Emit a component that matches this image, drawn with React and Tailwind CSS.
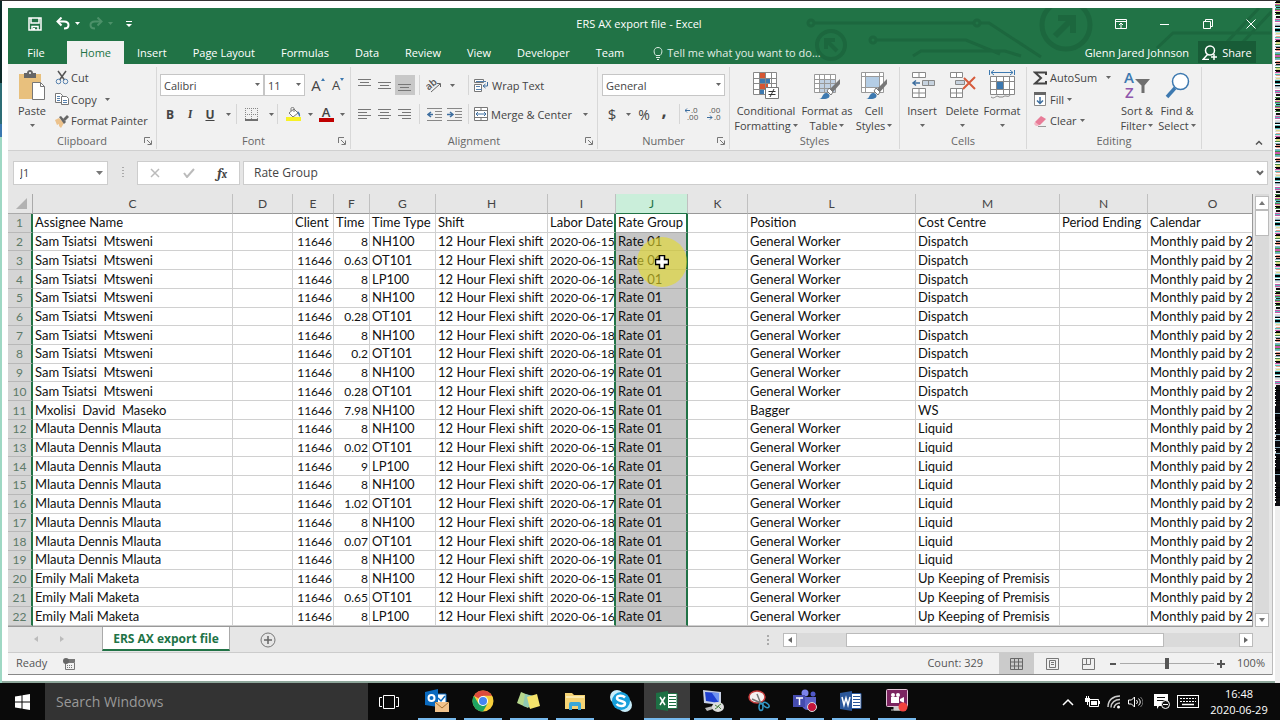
import React, { useState } from 'react';

const names = [
  ...Array(9).fill('Sam Tsiatsi  Mtsweni'),
  'Mxolisi  David  Maseko',
  ...Array(8).fill('Mlauta Dennis Mlauta'),
  ...Array(3).fill('Emily Mali Maketa'),
];
const times = ['8', '0.63', '8', '8', '0.28', '8', '0.2', '8', '0.28', '7.98', '8', '0.02', '9', '8', '1.02', '8', '0.07', '8', '8', '0.65', '8'];
const types = ['NH', 'OT', 'LP', 'NH', 'OT', 'NH', 'OT', 'NH', 'OT', 'NH', 'NH', 'OT', 'LP', 'NH', 'OT', 'NH', 'OT', 'NH', 'NH', 'OT', 'LP'];
const typeCodes = { NH: 'NH100', OT: 'OT101', LP: 'LP100' };
const days = [15, 15, 16, 17, 17, 18, 18, 19, 19, 15, 15, 15, 16, 17, 17, 18, 18, 19, 15, 15, 16];

const costCentre = (i) => {
  if (i < 9) return 'Dispatch';
  if (i === 9) return 'WS';
  if (i < 18) return 'Liquid';
  return 'Up Keeping of Premisis';
};

const columns = [
  { id: 'C', width: 'w-[200px]', title: 'Assignee Name' },
  { id: 'D', width: 'w-[60px]', title: '' },
  { id: 'E', width: 'w-[41px]', title: 'Client', right: true },
  { id: 'F', width: 'w-[36px]', title: 'Time', right: true },
  { id: 'G', width: 'w-[66px]', title: 'Time Type' },
  { id: 'H', width: 'w-[112px]', title: 'Shift' },
  { id: 'I', width: 'w-[68px]', title: 'Labor Date', right: true },
  { id: 'J', width: 'w-[72px]', title: 'Rate Group' },
  { id: 'K', width: 'w-[60px]', title: '' },
  { id: 'L', width: 'w-[168px]', title: 'Position' },
  { id: 'M', width: 'w-[144px]', title: 'Cost Centre' },
  { id: 'N', width: 'w-[88px]', title: 'Period Ending' },
  { id: 'O', width: 'w-[130px]', title: 'Calendar' },
];

const rows = names.map((name, i) => ({
  C: name,
  D: '',
  E: '11646',
  F: times[i],
  G: typeCodes[types[i]],
  H: '12 Hour Flexi shift',
  I: `2020-06-${days[i]}`,
  J: 'Rate 01',
  K: '',
  L: i === 9 ? 'Bagger' : 'General Worker',
  M: costCentre(i),
  N: '',
  O: 'Monthly paid by 2',
}));

// Small shared pieces
const Svg = ({ w, h, children, className = '' }) => (
  <svg width={w} height={h} viewBox={`0 0 ${w} ${h}`} fill="none" className={`shrink-0 ${className}`} aria-hidden="true">
    {children}
  </svg>
);

const Caret = ({ className = 'text-[#666]' }) => (
  <Svg w={5} h={3} className={className}><path d="M0 0h5L2.5 3z" fill="currentColor" /></Svg>
);

const Sep = () => <div className="h-5 w-px shrink-0 bg-[#d6d6d6]" />;

const Tool = ({ label, width = 'w-5', className = '', children }) => (
  <button aria-label={label} className={`flex h-5 shrink-0 items-center justify-center ${width} ${className}`}>{children}</button>
);

const Group = ({ label, width, launcher, children }) => (
  <section className={`flex shrink-0 flex-col border-r border-[#d8d8d8] ${width}`}>
    <div className="flex flex-1">{children}</div>
    <div className="relative h-4 text-center text-[11px] leading-4 text-[#666]">
      {label}
      {launcher && (
        <button aria-label={`${label} settings`} className="absolute right-1 top-1">
          <Svg w={8} h={8}><path d="M.5 6V.5H6M3 3l4 4M7.5 3.500V7.500H3.500" stroke="#777" /></Svg>
        </button>
      )}
    </div>
  </section>
);

const BigTool = ({ icon, lines, caretBelow, width }) => (
  <button className={`flex shrink-0 flex-col items-center whitespace-nowrap ${width}`}>
    <span className="flex h-9 items-center">{icon}</span>
    <span className="leading-[15px]">{lines[0]}</span>
    <span className="flex h-[15px] items-center gap-[2px] leading-[15px]">
      {!caretBelow && lines[1]}
      <Caret />
    </span>
  </button>
);

const Picker = ({ label, value, options, width }) => (
  <label className={`relative block ${width}`}>
    <span className="sr-only">{label}</span>
    <select defaultValue={value} className="block h-[22px] w-full appearance-none border border-[#c6c6c6] bg-white px-[3px] text-[11px] outline-none">
      {options.map((o) => <option key={o}>{o}</option>)}
    </select>
    <span className="pointer-events-none absolute right-1 top-[9px]"><Caret /></span>
  </label>
);

// Horizontal strokes used by the alignment buttons
const Lines = ({ rows: r }) => (
  <Svg w={14} h={12}>
    {r.map(([x1, x2, y]) => <path key={y} d={`M${x1} ${y}.5H${x2}`} stroke="#777" />)}
  </Svg>
);

const SaveIcon = () => (
  <Svg w={14} h={14}><path d="M1 1h12v12H1zM3 1v5h8V1M4 13V9.500h6V13" stroke="#fff" strokeWidth="1.500" /><path d="M5 11h2v2H5z" fill="#fff" /></Svg>
);
const UndoIcon = ({ flip }) => (
  <Svg w={14} h={13} className={flip ? '-scale-x-100' : ''}>
    <path d="M2 4.500h6c6 0 6 7 0 7" stroke={flip ? '#4c9169' : '#fff'} strokeWidth="2" />
    <path d="M5.500.500 1.500 4.500l4 4" stroke={flip ? '#4c9169' : '#fff'} strokeWidth="2" />
  </Svg>
);

const PasteIcon = () => (
  <Svg w={28} h={30}>
    <path d="M1 4h22v25H1z" fill="#e8c07d" />
    <path d="M6 3h3c0-4 6-4 6 0h3v5H6z" fill="#666" /><circle cx="12" cy="3" r="1" fill="#fff" />
    <path d="M14.500 12.500h8l4 4v13h-12z" fill="#fff" stroke="#777" /><path d="M22.500 12.500v4h4" stroke="#777" />
  </Svg>
);
const CutIcon = () => (
  <Svg w={14} h={15}>
    <path d="M3 1l6.500 9M11 1L4.500 10" stroke="#555" strokeWidth="1.500" />
    <circle cx="3.500" cy="11.500" r="2.300" stroke="#5580ad" /><circle cx="10.500" cy="11.500" r="2.300" stroke="#5580ad" />
  </Svg>
);
const CopyIcon = () => (
  <Svg w={14} h={14}>
    <path d="M.5 1.500h5l2 2v7h-7z" fill="#fff" stroke="#777" /><path d="M6.500 4.500h5l2 2v6h-7z" fill="#fff" stroke="#777" />
    <path d="M2 4.500h3M2 6.500h3M2 8.500h3M8 8.500h4M8 10.500h4" stroke="#5580ad" />
  </Svg>
);
const PainterIcon = () => (
  <Svg w={15} h={14}>
    <path d="M1 6l4-2 5 5-3 5-2-2 0-2-2 1z" fill="#ecc28c" />
    <path d="M5 3l2-1 5 6-2 2z" fill="#666" /><path d="M9 5l4-4 2 2-4 4z" fill="#666" />
  </Svg>
);

const FillColor = () => (
  <Svg w={16} h={14}>
    <path d="M3 6l5-4 4 4-5 4z" fill="#fff" stroke="#777" /><path d="M5 4V1.500C5 0 8 0 8 1.500V5" stroke="#777" />
    <path d="M11.500 4c2 1 3 3 2.500 6-1.500-1-2-3-2.500-6z" fill="#4276b0" /><path d="M0 10h15v4H0z" fill="#f7f125" />
  </Svg>
);
const BorderIcon = () => (
  <Svg w={13} h={13}>
    <path d="M.5 0v12M6.500 0v12M12.500 0v12M0 .5h13M0 6.500h13" stroke="#888" strokeDasharray="1 1" /><path d="M0 12h13" stroke="#444" strokeWidth="1.500" />
  </Svg>
);
const AngleIcon = () => (
  <Svg w={16} h={15}>
    <text x="0" y="10" fontSize="10" fontWeight="600" fill="#555" transform="rotate(-40 5 8)">ab</text>
    <path d="M5 14L14 6M11 5.500h3.500V9" stroke="#666" />
  </Svg>
);
const Indent = ({ right }) => (
  <Svg w={15} h={13}>
    <path d="M0 .5h15M8 3.500h7M8 6.500h7M8 9.500h7M0 12.500h15" stroke="#888" />
    <path d={right ? 'M0 6.500h5M3 4l3 2.500L3 9' : 'M1 6.500h5M4 4L1 6.500 4 9'} stroke="#3d6e9f" strokeWidth="1.500" />
  </Svg>
);
const WrapIcon = () => (
  <Svg w={15} h={15}>
    <path d="M.5 1.500h9v3h-9zM.5 6.500h7v7h-7z" fill="#fff" stroke="#777" /><path d="M2 3.500h10M2 8.500h4M2 11.500h6" stroke="#5580ad" />
    <path d="M13.500 4v4h-4M11.500 6L9 8l2.500 2" stroke="#3d6e9f" />
  </Svg>
);
const MergeIcon = () => (
  <Svg w={14} h={14}>
    <path d="M.5.500h13v13H.5zM.5 3.500h13M.5 10.500h13M7 .5v3M7 10.500v3" fill="#fff" stroke="#777" />
    <path d="M2 7h10M4 5L2 7l2 2M10 5l2 2-2 2" stroke="#3d6e9f" />
  </Svg>
);
const DecimalIcon = ({ less }) => (
  <Svg w={15} h={14}>
    <text x={less ? 2 : 6} y="6" fontSize="8" fill="#555">{less ? '.00' : '.0'}</text>
    <text x={less ? 7 : 2} y="13" fontSize="8" fill="#555">{less ? '.0' : '.00'}</text>
    <path d={less ? 'M0 10.500h5M3 8.500l2 2-2 2' : 'M0 3.500h5M2 1.500l-2 2 2 2'} stroke="#3d6e9f" />
  </Svg>
);

const ConditionalIcon = () => (
  <Svg w={28} h={29}>
    <path d="M1.500 1.500h23v22h-23z" fill="#fff" />
    <path d="M8 1h6v6H8zM8 12h8v6H8z" fill="#d65532" /><path d="M8 7h10v5H8zM8 18h4v6H8z" fill="#3d79b0" />
    <path d="M1.500 1.500h23v22h-23zM7.500 1.500v22M13.500 1.500v22M19.500 1.500v22M1.500 7.500h23M1.500 12.500h23M1.500 18.500h23" stroke="#888" />
    <path d="M13.500 16.500h13v11h-13z" fill="#fff" stroke="#777" /><path d="M16.500 20.500h7M16.500 23.500h7M22 18l-4 8" stroke="#333" />
  </Svg>
);
const Brush = () => (
  <>
    <path d="M27 8v5l-7 8-3-3z" fill="#777" /><path d="M16 17l4 4-2 3-4-4z" fill="#fff" stroke="#777" />
    <path d="M6 28c4 0 3-7 8-6 5 2 2 6-2 6z" fill="#3d79b0" />
  </>
);
const TableIcon = () => (
  <Svg w={28} h={29}>
    <path d="M1.500 3.500h21v18h-21z" fill="#fff" /><path d="M7 8h15v13H7z" fill="#c1d1e3" />
    <path d="M1.500 3.500h21v18h-21zM6.500 3.500v18M11.500 3.500v18M17.500 3.500v18M1.500 8.500h21M1.500 12.500h21M1.500 17.500h21" stroke="#999" /><Brush />
  </Svg>
);
const CellStyleIcon = () => (
  <Svg w={28} h={29}>
    <path d="M1.500 1.500h22v20h-22z" fill="#fff" /><path d="M6 6h13v10H6z" fill="#b4cde5" />
    <path d="M1.500 1.500h22v20h-22zM5.500 1.500v20M19.500 1.500v20M1.500 5.500h22M1.500 16.500h22" stroke="#999" /><Brush />
  </Svg>
);
const InsertIcon = () => (
  <Svg w={25} h={28}>
    <path d="M2.500 1.500h13v5h-13zM9 1.500v5M2.500 17.500h13v9h-13zM9 17.500v9M2.500 22h13" fill="#fff" stroke="#888" />
    <path d="M12.500 9.500h12v5h-12zM18.500 9.500v5" fill="#c7d3df" stroke="#888" /><path d="M3 12h7M6 9.500L3 12l3 2.500" stroke="#3d6e9f" strokeWidth="1.500" />
  </Svg>
);
const DeleteIcon = () => (
  <Svg w={27} h={28}>
    <path d="M1.500 1.500h12v5h-12zM7.500 1.500v5M1.500 17.500h12v9h-12zM7.500 17.500v9M1.500 22h12" fill="#fff" stroke="#888" />
    <path d="M6.500 9.500h9v4h-9z" fill="#c7d3df" stroke="#888" /><path d="M15 7l11 11M26 6L14 18" stroke="#d65b3c" strokeWidth="2" />
  </Svg>
);
const FormatIcon = () => (
  <Svg w={27} h={30}>
    <path d="M1.500 6.500h24v18h-24z" fill="#fff" /><path d="M8 12h6v8H8z" fill="#3d79b0" />
    <path d="M1.500 6.500h24v18h-24zM7.500 6.500v18M14.500 6.500v18M20.500 6.500v18M1.500 11.500h24M1.500 19.500h24M2 27c4 3 5-3 8 0h4c3-3 5 2 8-3" stroke="#888" />
    <path d="M2 2.500h22M5 0L2 2.500 5 5M21 0l3 2.500L21 5M.5 0v5M25.500 0v5" stroke="#3d79b0" />
  </Svg>
);
const SigmaIcon = () => (
  <Svg w={14} h={14}><path d="M13 4V1.500H2L8 7l-6 5.500h11V10" stroke="#444" strokeWidth="2" /></Svg>
);
const FillDownIcon = () => (
  <Svg w={12} h={14}><path d="M.5.500h11v13H.5z" fill="#fff" stroke="#888" /><path d="M0 0h12v3H0z" fill="#666" /><path d="M6 5v6M3 8.500l3 3 3-3" stroke="#3d6e9f" strokeWidth="1.500" /></Svg>
);
const EraserIcon = () => (
  <Svg w={13} h={12}><path d="M1 7l6-6 5 3-6 6H3z" fill="#e87c98" /><path d="M1 7l4 3-1 1H2L0 9z" fill="#f3b7c5" /><path d="M4 11.500h8" stroke="#999" /></Svg>
);
const SortIcon = () => (
  <Svg w={28} h={28}>
    <text x="1" y="12" fontSize="15" fontWeight="600" fill="#3d79b0">A</text><text x="2" y="27" fontSize="15" fontWeight="600" fill="#8f57ac">Z</text>
    <path d="M12 8h15l-5.500 6.500V22h-3v-7.500z" fill="#6f6f6f" />
  </Svg>
);
const FindIcon = () => (
  <Svg w={25} h={27}><circle cx="15.500" cy="9.500" r="8" fill="#fff" stroke="#3d79b0" strokeWidth="1.500" /><path d="M10 16l-8 9" stroke="#3d79b0" strokeWidth="3.500" /></Svg>
);

// Circuit pattern at the right of the title bar
const Circuit = () => (
  <svg className="pointer-events-none absolute right-0 top-0 h-14 w-[470px]" viewBox="0 0 470 56" fill="none" aria-hidden="true">
    <g stroke="#1c673e" strokeWidth="3">
      <circle cx="9" cy="15" r="3" /><path d="M13 15h158M179 15h8l52 34" /><circle cx="175" cy="15" r="3" />
      <circle cx="71" cy="32" r="3" /><path d="M75 32h89l34 14M111 48l8-5h84l16 5" />
      <circle cx="29" cy="37" r="14" strokeWidth="4" /><path d="M35 43L24 32M24 41v-9h9" strokeWidth="4" />
      <circle cx="264" cy="17" r="24" strokeWidth="5" /><path d="M253 28l17-17M256 10h15v15" strokeWidth="6" />
      <path d="M355 40l16-15h99M425 34l32-34M441 34l29-31" />
    </g>
  </svg>
);

const tabs = ['Insert', 'Page Layout', 'Formulas', 'Data', 'Review', 'View', 'Developer', 'Team'];

const TitleBar = () => (
  <header className="relative h-14 shrink-0 bg-[#217346] text-[11px] text-white">
    <Circuit />
    <div className="relative flex h-[33px] items-center">
      <div className="flex w-[500px] items-center pb-[2px] pl-5">
        <button aria-label="Save"><SaveIcon /></button>
        <button aria-label="Undo" className="ml-[14px]"><UndoIcon /></button>
        <button aria-label="Undo list" className="ml-[5px]"><Caret className="text-white" /></button>
        <button aria-label="Redo" className="ml-[9px]"><UndoIcon flip /></button>
        <button aria-label="Redo list" className="ml-[5px]"><Caret className="text-[#4c9169]" /></button>
        <button aria-label="Customize toolbar" className="ml-[13px]">
          <Svg w={6} h={6}><path d="M0 .5h6" stroke="#fff" /><path d="M0 3h6L3 6z" fill="#fff" /></Svg>
        </button>
      </div>
      <h1 className="absolute inset-x-0 pr-0.5 text-center">ERS AX export file - Excel</h1>
      <div className="absolute right-4 flex items-center gap-[33px] pb-[2px]">
        <button aria-label="Ribbon display options"><Svg w={12} h={10}><path d="M.5.500h11v9H.5zM.5 2.500h11M6 9V4M4 6l2-2 2 2" stroke="#fff" /></Svg></button>
        <button aria-label="Minimize"><Svg w={10} h={10}><path d="M0 5.500h9" stroke="#fff" /></Svg></button>
        <button aria-label="Restore"><Svg w={10} h={10}><path d="M.5 2.500h7v7h-7zM2.500 2.500v-2h7v7h-2" stroke="#fff" /></Svg></button>
        <button aria-label="Close"><Svg w={10} h={10}><path d="M.5.500l9 9M9.500.500l-9 9" stroke="#fff" /></Svg></button>
      </div>
    </div>
    <nav className="relative flex h-[23px] leading-[23px]">
      <button className="w-[59px] pr-[3px]">File</button>
      <button className="w-[57px] bg-[#f1f1f1] text-[#217346]">Home</button>
      {tabs.map((t) => <button key={t} className="px-[13px]">{t}</button>)}
      <button className="flex items-center gap-1 pl-4 text-[#e0eee5]">
        <Svg w={10} h={14}><path d="M3 9.500C0 7 .5 1.500 5 1.500S10 7 7 9.500zM3 11.500h4M4 13.500h2" stroke="#e0eee5" /></Svg>
        Tell me what you want to do...
      </button>
      <div className="ml-auto flex pr-4">
        <span className="pr-[9px]">Glenn Jared Johnson</span>
        <button className="flex h-[22px] w-[58px] items-center justify-center gap-1 bg-[#185c37]">
          <Svg w={16} h={15}><circle cx="8" cy="5.500" r="4.500" stroke="#fff" strokeWidth="1.500" /><path d="M5.500 9.500L1 14.500h6M9 12h6M12 9v6" stroke="#fff" strokeWidth="1.500" /></Svg>
          Share
        </button>
      </div>
    </nav>
  </header>
);

const Ribbon = () => (
  <div className="relative flex h-[87px] shrink-0 border-b border-[#d0d0d0] bg-[#f1f1f1] pb-px pt-[3px] text-[11px] leading-[15px] text-[#444]">
    <Group label="Clipboard" width="w-[149px]" launcher>
      <BigTool width="w-[48px]" icon={<PasteIcon />} lines={['Paste']} caretBelow />
      <div className="flex flex-col items-start">
        <button className="flex h-[21px] items-center gap-1"><span className="flex w-[11px] justify-center"><CutIcon /></span>Cut</button>
        <button className="flex h-[22px] items-center gap-1"><span className="flex w-[11px] justify-center"><CopyIcon /></span>Copy<span className="ml-1"><Caret /></span></button>
        <button className="flex h-[21px] items-center gap-1 whitespace-nowrap"><span className="flex w-[11px] justify-center"><PainterIcon /></span>Format Painter</button>
      </div>
    </Group>
    <Group label="Font" width="w-[194px]" launcher>
      <div className="flex flex-col gap-2 pl-[3px] pt-[7px]">
        <div className="flex items-center">
          <Picker label="Font" value="Calibri" options={['Calibri', 'Arial', 'Cambria']} width="w-[104px]" />
          <Picker label="Font size" value="11" options={['9', '10', '11', '12']} width="w-[41px]" />
          <Tool label="Increase font size" className="ml-[3px] text-[15px]">A<Svg w={4} h={3} className="mb-3"><path d="M0 3h4L2 0z" fill="#3d79b0" /></Svg></Tool>
          <Tool label="Decrease font size" className="text-[13px]">A<Svg w={4} h={3} className="mb-3"><path d="M0 0h4L2 3z" fill="#3d79b0" /></Svg></Tool>
        </div>
        <div className="flex items-center text-[12px]">
          <Tool label="Bold" className="font-bold">B</Tool>
          <Tool label="Italic" className="font-serif font-bold italic">I</Tool>
          <Tool label="Underline" className="font-bold underline">U</Tool>
          <Tool label="Underline style" width="w-4"><Caret /></Tool>
          <Sep />
          <Tool label="Borders" width="w-7"><BorderIcon /></Tool>
          <Tool label="Border style" width="w-3"><Caret /></Tool>
          <Sep />
          <Tool label="Fill color" width="w-6" className="ml-1"><FillColor /></Tool>
          <Tool label="Fill colors" width="w-2"><Caret /></Tool>
          <Tool label="Font color" width="w-6"><span className="h-[15px] w-[15px] border-b-4 border-[#c00000] text-center text-[13px] font-semibold leading-[11px]">A</span></Tool>
          <Tool label="Font colors" width="w-2"><Caret /></Tool>
        </div>
      </div>
    </Group>
    <Group label="Alignment" width="w-[247px]" launcher>
      <div className="flex flex-col gap-2 pl-1 pt-[7px]">
        <div className="flex h-[22px] items-center">
          <Tool label="Top align"><Lines rows={[[0, 13, 0], [2, 11, 3], [0, 13, 6]]} /></Tool>
          <Tool label="Middle align"><Lines rows={[[0, 13, 3], [2, 11, 6], [0, 13, 9]]} /></Tool>
          <Tool label="Bottom align" className="bg-[#c8c8c8]"><Lines rows={[[0, 13, 5], [2, 11, 8], [0, 13, 11]]} /></Tool>
          <span className="ml-1"><Sep /></span>
          <Tool label="Orientation" width="w-7"><AngleIcon /></Tool>
          <Tool label="Orientation list" width="w-2" className="mr-3"><Caret /></Tool>
          <Sep />
          <button className="ml-[5px] flex items-center gap-[3px]"><WrapIcon />Wrap Text</button>
        </div>
        <div className="flex items-center">
          <Tool label="Align left"><Lines rows={[[0, 13, 1], [0, 9, 4], [0, 13, 7], [0, 9, 10]]} /></Tool>
          <Tool label="Center"><Lines rows={[[0, 13, 1], [2, 11, 4], [0, 13, 7], [2, 11, 10]]} /></Tool>
          <Tool label="Align right"><Lines rows={[[0, 13, 1], [4, 13, 4], [0, 13, 7], [4, 13, 10]]} /></Tool>
          <span className="ml-1"><Sep /></span>
          <Tool label="Decrease indent" className="ml-1"><Indent /></Tool>
          <Tool label="Increase indent" className="mr-1"><Indent right /></Tool>
          <Sep />
          <button className="ml-[5px] flex items-center gap-[3px] whitespace-nowrap"><MergeIcon />Merge &amp; Center<span className="ml-2"><Caret /></span></button>
        </div>
      </div>
    </Group>
    <Group label="Number" width="w-[132px]" launcher>
      <div className="flex flex-col gap-2 pl-1 pt-[7px]">
        <Picker label="Number format" value="General" options={['General', 'Number', 'Currency']} width="w-[123px]" />
        <div className="flex items-center">
          <Tool label="Currency" className="text-[15px]">$</Tool>
          <Tool label="Currency list" width="w-3"><Caret /></Tool>
          <Tool label="Percent" className="text-[14px]">%</Tool>
          <Tool label="Comma" className="pb-2 text-[18px] font-bold">,</Tool>
          <span className="ml-[5px]"><Sep /></span>
          <Tool label="Increase decimal" width="w-6"><DecimalIcon /></Tool>
          <Tool label="Decrease decimal"><DecimalIcon less /></Tool>
        </div>
      </div>
    </Group>
    <Group label="Styles" width="w-[170px]">
      <BigTool width="w-[72px]" icon={<ConditionalIcon />} lines={['Conditional', 'Formatting']} />
      <BigTool width="w-[50px]" icon={<TableIcon />} lines={['Format as', 'Table']} />
      <BigTool width="w-[44px]" icon={<CellStyleIcon />} lines={['Cell', 'Styles']} />
    </Group>
    <Group label="Cells" width="w-[127px]">
      <BigTool width="w-[44px]" icon={<InsertIcon />} lines={['Insert']} caretBelow />
      <BigTool width="w-[36px]" icon={<DeleteIcon />} lines={['Delete']} caretBelow />
      <BigTool width="w-[44px]" icon={<FormatIcon />} lines={['Format']} caretBelow />
    </Group>
    <Group label="Editing" width="w-[175px]">
      <div className="flex w-[91px] shrink-0 flex-col items-start pl-[6px]">
        <button className="flex h-[21px] items-center gap-[3px]"><SigmaIcon />AutoSum<span className="ml-[6px]"><Caret /></span></button>
        <button className="flex h-[22px] items-center gap-[3px]"><span className="flex w-[14px] justify-center"><FillDownIcon /></span>Fill<Caret /></button>
        <button className="flex h-[21px] items-center gap-[3px]"><span className="flex w-[14px] justify-center"><EraserIcon /></span>Clear<Caret /></button>
      </div>
      <BigTool width="w-[38px]" icon={<SortIcon />} lines={['Sort &', 'Filter']} />
      <BigTool width="w-[42px]" icon={<FindIcon />} lines={['Find &', 'Select']} />
    </Group>
    <button aria-label="Collapse ribbon" className="absolute bottom-[5px] right-[9px]">
      <Svg w={8} h={5}><path d="M1 4.500l3-3 3 3" stroke="#555" strokeWidth="1.500" /></Svg>
    </button>
  </div>
);

const FormulaBar = () => {
  const [cell, setCell] = useState('J1');
  const [formula, setFormula] = useState('Rate Group');

  return (
    <div className="flex h-[43px] shrink-0 items-start bg-[#e6e6e6] pl-[5px] pr-1 pt-[10px] text-[12px] text-[#444]">
      <div className="flex h-6 w-[95px] items-center border border-[#cdcdcd] bg-white pr-1">
        <input aria-label="Name box" value={cell} onChange={(e) => setCell(e.target.value)} className="min-w-0 flex-1 pl-[6px] text-[11px] outline-none" />
        <Svg w={7} h={4}><path d="M0 0h7L3.500 4z" fill="#777" /></Svg>
      </div>
      <div className="flex h-6 w-[29px] items-center justify-center"><Svg w={2} h={12}><path d="M1 0v12" stroke="#aaa" strokeWidth="2" strokeDasharray="1 2" /></Svg></div>
      <div className="flex h-6 w-[103px] items-center border border-[#cdcdcd] bg-white">
        <button aria-label="Cancel" className="flex w-[34px] justify-center"><Svg w={10} h={10}><path d="M1 1l8 8M9 1L1 9" stroke="#bbb" strokeWidth="1.500" /></Svg></button>
        <button aria-label="Enter" className="flex w-[34px] justify-center"><Svg w={12} h={10}><path d="M1 5l3 4 7-8" stroke="#bbb" strokeWidth="2" /></Svg></button>
        <button aria-label="Insert function" className="w-[34px] font-serif text-[14px] font-bold italic">f<span className="text-[11px]">x</span></button>
      </div>
      <div className="ml-[3px] flex h-6 flex-1 items-center border border-[#cdcdcd] bg-white pr-[3px]">
        <input aria-label="Formula" value={formula} onChange={(e) => setFormula(e.target.value)} className="min-w-0 flex-1 pl-[10px] outline-none" />
        <button aria-label="Expand formula bar"><Svg w={8} h={6}><path d="M1 1l3 3 3-3" stroke="#666" strokeWidth="2" /></Svg></button>
      </div>
    </div>
  );
};

const Sheet = () => (
  <div className="flex min-h-0 flex-1 bg-[#e6e6e6]">
    <div className="relative min-w-0 flex-1 overflow-hidden border-b border-r border-[#999] font-[Lato,'Liberation_Sans',sans-serif] text-[13px] leading-[17px] text-[#111]">
      <table className="h-[432px] w-[1270px] table-fixed border-separate border-spacing-0">
        <thead>
          <tr className="h-5 bg-[#e6e6e6] text-[12px] text-[#444]">
            <th aria-label="Select all" className="w-[25px] border-b border-r border-[#aaa]">
              <Svg w={11} h={11} className="ml-2"><path d="M11 0v11H0z" fill="#b2b2b2" /></Svg>
            </th>
            {columns.map((c) => (
              <th key={c.id} className={`p-0 border-b border-r font-normal ${c.width} ${c.id === 'J' ? 'border-b-[#217346] border-r-[#c0c0c0] bg-[#caeeda] text-[#217346]' : 'border-b-[#999] border-r-[#c0c0c0]'}`}>{c.id}</th>
            ))}
          </tr>
        </thead>
        <tbody>
          {[Object.fromEntries(columns.map((c) => [c.id, c.title])), ...rows].map((row, r) => (
            <tr key={r} className="bg-white">
              <th className="border-b border-r-2 border-b-[#b8b8b8] border-r-[#217346] bg-[#d5d5d5] p-0 text-[12px] font-normal text-[#5d7a69]">{r + 1}</th>
              {columns.map((c) => {
                const picked = c.id === 'J';
                const beforePicked = c.id === 'I';
                return (
                  <td
                    key={c.id}
                    className={`overflow-hidden whitespace-pre border-b pl-[2px] py-0 ${c.right && r > 0 ? 'text-right text-[12px]' : ''} ${picked ? 'border-r-2 border-b-[#aaa] border-r-[#217346]' : beforePicked ? 'border-r-2 border-b-[#d0d0d0] border-r-[#217346]' : 'border-r border-[#d0d0d0] pr-px'} ${picked && r > 0 ? 'bg-[#c6c6c6]' : ''}`}
                  >
                    {row[c.id]}
                  </td>
                );
              })}
            </tr>
          ))}
        </tbody>
      </table>
      {/* pointer highlight */}
      <div className="absolute left-[629px] top-[43px] flex size-[50px] items-center justify-center rounded-full bg-[#e6dc28]/60">
        <Svg w={14} h={14}><path d="M4.500.500h5v4h4v5h-4v4h-5v-4h-4v-5h4z" fill="#fff" stroke="#000" strokeWidth="1.500" /></Svg>
      </div>
    </div>
    <div className="ml-[2px] mr-[3px] flex w-[14px] shrink-0 flex-col bg-[#dadada] pt-[2px]">
      <button aria-label="Scroll up" className="flex h-[14px] items-center justify-center border border-[#bbb] bg-white"><Svg w={6} h={4}><path d="M0 4h6L3 0z" fill="#777" /></Svg></button>
      <div className="h-[26px] border border-[#bbb] bg-white" />
      <button aria-label="Scroll down" className="mt-auto flex h-[14px] items-center justify-center border border-[#bbb] bg-white"><Svg w={6} h={4}><path d="M0 0h6L3 4z" fill="#777" /></Svg></button>
    </div>
  </div>
);

const SheetTabs = () => (
  <div className="flex h-[26px] shrink-0 items-start border-b border-[#ccc] bg-[#e6e6e6]">
    <div className="flex h-6 w-[94px] items-center gap-[22px] pl-[26px]">
      <button aria-label="Previous sheet"><Svg w={4} h={6}><path d="M4 0v6L0 3z" fill="#bbb" /></Svg></button>
      <button aria-label="Next sheet"><Svg w={4} h={6}><path d="M0 0v6l4-3z" fill="#bbb" /></Svg></button>
    </div>
    <button className="h-6 w-[128px] border-x border-b-2 border-x-[#aaa] border-b-[#217346] bg-white text-[12px] font-bold leading-6 text-[#217346]">ERS AX export file</button>
    <button aria-label="New sheet" className="ml-[30px] mt-[5px]"><Svg w={16} h={16}><circle cx="8" cy="8" r="7" stroke="#777" /><path d="M4 8h8M8 4v8" stroke="#666" strokeWidth="1.500" /></Svg></button>
    <div className="ml-auto mt-[6px] flex items-center">
      <Svg w={2} h={10} className="mr-[14px]"><path d="M1 0v10" stroke="#aaa" strokeWidth="2" strokeDasharray="2 2" /></Svg>
      <button aria-label="Scroll left" className="flex h-[14px] w-[14px] items-center justify-center border border-[#bbb] bg-white"><Svg w={4} h={6}><path d="M4 0v6L0 3z" fill="#666" /></Svg></button>
      <div className="flex h-[14px] w-[442px] bg-[#dadada] pl-[49px]"><div className="w-[318px] border border-[#bbb] bg-white" /></div>
      <button aria-label="Scroll right" className="mr-[19px] flex h-[14px] w-[14px] items-center justify-center border border-[#bbb] bg-white"><Svg w={4} h={6}><path d="M0 0v6l4-3z" fill="#666" /></Svg></button>
    </div>
  </div>
);

const StatusBar = () => {
  const [zoom, setZoom] = useState(100);

  return (
    <footer className="flex h-[22px] shrink-0 items-center border-b border-[#888] bg-[#f1f1f1] pl-2 pr-[7px] text-[11px] text-[#555]">
      <span className="w-[47px]">Ready</span>
      <Svg w={12} h={12}><path d="M2.500 4.500h9v7h-9z" stroke="#777" /><path d="M5 1h7v3H5z" fill="#777" /><circle cx="3" cy="3" r="3" fill="#666" /><path d="M4 7.500h6M4 9.500h6" stroke="#777" strokeDasharray="1 1" /></Svg>
      <span className="ml-auto mr-4">Count: 329</span>
      <button aria-label="Normal view" className="flex h-[21px] w-[35px] items-center justify-center bg-[#cbcbcb]"><Svg w={13} h={12}><path d="M.5.500h12v11H.5zM4.500.500v11M8.500.500v11M.5 4h12M.5 8h12" stroke="#666" /></Svg></button>
      <button aria-label="Page layout view" className="flex w-9 justify-center"><Svg w={13} h={12}><path d="M.5.500h12v11H.5zM3.500 2.500h6v7h-6zM5 4.500h3M5 6.500h3" stroke="#777" /></Svg></button>
      <button aria-label="Page break view" className="flex w-9 justify-center"><Svg w={13} h={12}><path d="M.5.500h12v11H.5zM4.500.500v6h4v-6M.5 6.500h4" stroke="#777" /></Svg></button>
      <button aria-label="Zoom out" className="ml-1"><Svg w={7} h={8}><path d="M0 4h6" stroke="#555" strokeWidth="2" /></Svg></button>
      <input
        type="range"
        aria-label="Zoom"
        min="0"
        max="200"
        value={zoom}
        onChange={(e) => setZoom(Number(e.target.value))}
        className="mx-[3px] h-[11px] w-[94px] appearance-none bg-[linear-gradient(#aaa,#aaa)] bg-[length:100%_1px] bg-center bg-no-repeat [&::-webkit-slider-thumb]:h-[11px] [&::-webkit-slider-thumb]:w-1 [&::-webkit-slider-thumb]:appearance-none [&::-webkit-slider-thumb]:bg-[#555]"
      />
      <button aria-label="Zoom in"><Svg w={8} h={8}><path d="M0 4h8M4 0v8" stroke="#555" strokeWidth="2" /></Svg></button>
      <span className="w-[40px] text-right">{zoom}%</span>
    </footer>
  );
};

// Taskbar icons
const OutlookIcon = () => (
  <Svg w={24} h={24}>
    <path d="M11 5h10v10H11z" fill="#fff" stroke="#0a6abf" /><path d="M13 9l3 3 4-5" stroke="#0a6abf" strokeWidth="1.500" />
    <path d="M0 3l13-3v18L0 16z" fill="#0a6abf" /><circle cx="6.500" cy="9" r="3" stroke="#fff" strokeWidth="2" />
    <path d="M10 13h14v10H10z" fill="#f2c38c" /><path d="M10 13l7 6 7-6" stroke="#a87333" />
  </Svg>
);
const ChromeIcon = () => (
  <Svg w={22} h={22}>
    <circle cx="11" cy="11" r="10.500" fill="#f7cf3c" /><path d="M11 11L1.900 5.750A10.500 10.500 0 0120.100 5.750H11z" fill="#dd4b3e" />
    <path d="M1.900 5.750A10.500 10.500 0 0011 21.500L15.500 13.700 11 11 6.500 13.700z" fill="#1ea361" />
    <circle cx="11" cy="11" r="5" fill="#fff" /><circle cx="11" cy="11" r="4" fill="#4585f2" />
  </Svg>
);
const NotesIcon = () => (
  <Svg w={24} h={20}><path d="M4 1l12 5-5 11L0 12z" fill="#b6d88c" /><path d="M8 3l9 2-2 12-9-2z" fill="#8fc9b4" /><path d="M10 6l10-3 3 12-10 3z" fill="#f5e36b" /></Svg>
);
const FolderIcon = () => (
  <Svg w={22} h={20}><path d="M1 2h7l2 2h11v14H1z" fill="#f4d374" /><path d="M2 5h18v2H2z" fill="#fbeaae" /><path d="M5 19v-6q0-2 2-2h8q2 0 2 2v6h-3v-4H8v4z" fill="#38a7d8" /></Svg>
);
const SkypeIcon = () => (
  <Svg w={22} h={22}><circle cx="7" cy="7" r="7" fill="#c8eefb" /><circle cx="15" cy="15" r="7" fill="#c8eefb" /><circle cx="11" cy="11" r="9" fill="#169fdb" /><path d="M15 7.500C12 4.500 7 5.500 7 8c0 4 8 2 8 5.500 0 3-6 3.500-8.500.500" stroke="#fff" strokeWidth="2.500" /></Svg>
);
const ExcelIcon = () => (
  <Svg w={22} h={20}><path d="M10 2.500h11v15H10z" fill="#fff" stroke="#1d7044" /><path d="M13 5.500h7M13 8.500h7M13 11.500h7M13 14.500h7" stroke="#1d7044" /><path d="M0 2l12-2v20L0 18z" fill="#1d7044" /><path d="M4 6l5 8M9 6l-5 8" stroke="#fff" strokeWidth="1.500" /></Svg>
);
const RemoteIcon = () => (
  <Svg w={24} h={24}><path d="M2 1l18 2v13L3 14z" fill="#c8d0e4" /><path d="M4 3l14 1v10L5 12z" fill="#1e3fd0" /><path d="M11 4l7 0v10z" fill="#6e92f2" /><path d="M4 19l8-2 3 2-9 3z" fill="#bbb" /><ellipse cx="17" cy="18" rx="6" ry="5" fill="#ddd" /><path d="M14 16l3 2-3 2M20 15l-3 2 3 3" stroke="#4b8445" /></Svg>
);
const SnipIcon = () => (
  <Svg w={22} h={22}><ellipse cx="9" cy="7" rx="8" ry="6" fill="#f4eeee" stroke="#c63a3a" strokeWidth="1.500" /><path d="M4 9l11 5M9 4l4 10" stroke="#777" strokeWidth="1.500" /><ellipse cx="13" cy="17" rx="2" ry="3.500" stroke="#3496c4" strokeWidth="1.500" /><ellipse cx="18" cy="15" rx="3.500" ry="2" stroke="#3496c4" strokeWidth="1.500" transform="rotate(35 18 15)" /></Svg>
);
const TeamsIcon = () => (
  <Svg w={24} h={24}><circle cx="12" cy="4" r="3.500" fill="#7b83eb" /><circle cx="20" cy="5" r="2.500" fill="#5059c9" /><path d="M8 8h15v8q-2 5-8 5-5 0-7-6z" fill="#5b62c8" /><path d="M0 6h12v12H0z" fill="#454caf" /><path d="M3 9h7M6.500 9v7" stroke="#fff" strokeWidth="1.500" /><circle cx="19" cy="18" r="4.500" fill="#c4153b" stroke="#ddd" /></Svg>
);
const WordIcon = () => (
  <Svg w={22} h={20}><path d="M10 2.500h11v15H10z" fill="#fff" stroke="#2b579a" /><path d="M13 5.500h7M13 8.500h7M13 11.500h7M13 14.500h7" stroke="#2b579a" /><path d="M0 2l12-2v20L0 18z" fill="#2b579a" /><path d="M2 6l2 8 2-7 2 7 2-8" stroke="#fff" strokeWidth="1.500" /></Svg>
);
const RecorderIcon = () => (
  <Svg w={23} h={23}><rect x=".5" y=".5" width="21" height="17" rx="1" fill="#7c2561" stroke="#e3c5d7" /><path d="M5 8h8v6H5zM14 10l4-2v6l-4-2z" fill="#fff" /><circle cx="7" cy="6" r="2" fill="#fff" /><circle cx="12" cy="6" r="2" fill="#fff" /><path d="M8 18h6v3H8zM5 21h12" fill="#ccc" stroke="#ccc" /><circle cx="17" cy="18" r="4.500" fill="#f2433f" /></Svg>
);

const apps = [
  { name: 'Outlook', icon: <OutlookIcon />, bar: 'w-[38px]' },
  { name: 'Chrome', icon: <ChromeIcon />, bar: 'w-[38px]' },
  { name: 'Sticky Notes', icon: <NotesIcon />, bar: 'w-[38px]' },
  { name: 'File Explorer', icon: <FolderIcon />, bar: 'w-[38px]' },
  { name: 'Skype', icon: <SkypeIcon />, bar: 'w-0' },
  { name: 'Excel', icon: <ExcelIcon />, bar: 'w-full', active: true },
  { name: 'Remote Desktop', icon: <RemoteIcon />, bar: 'w-[38px]' },
  { name: 'Snipping Tool', icon: <SnipIcon />, bar: 'w-[38px]' },
  { name: 'Teams', icon: <TeamsIcon />, bar: 'w-[38px]' },
  { name: 'Word', icon: <WordIcon />, bar: 'w-[38px]' },
  { name: 'Screen Recorder', icon: <RecorderIcon />, bar: 'w-[38px]' },
];

const Taskbar = () => (
  <div className="flex h-[37px] shrink-0 bg-[#0a0a0a] text-white">
    <button aria-label="Start" className="flex w-[45px] items-center justify-center">
      <Svg w={15} h={16}><path d="M0 2.500l6.500-1V7.500H0zM7.500 1.300L15 0v7.500H7.500zM0 8.500h6.500v6L0 13.500zM7.500 8.500H15V16l-7.500-1.200z" fill="#fff" /></Svg>
    </button>
    <input aria-label="Search Windows" placeholder="Search Windows" className="w-[323px] bg-[#333] pl-[11px] text-[14px] outline-none placeholder:text-[#999]" />
    <button aria-label="Task view" className="flex w-[46px] items-center justify-center pr-1">
      <Svg w={20} h={14}><path d="M4.500.500h11v13h-11zM3 2.500H.5v9H3M17 2.500h2.500v9H17" stroke="#fff" /></Svg>
    </button>
    {apps.map((a) => (
      <button key={a.name} aria-label={a.name} className={`flex w-[46px] shrink-0 flex-col items-center ${a.active ? 'bg-[#3b3b3b]' : ''}`}>
        <span className="flex flex-1 items-center">{a.icon}</span>
        <span className={`h-[2px] bg-[#76b9ed] ${a.bar}`} />
      </button>
    ))}
    <div className="ml-auto flex items-center gap-[7px] pr-3">
      <button aria-label="Hidden icons" className="mr-1"><Svg w={12} h={8}><path d="M1 7l5-5 5 5" stroke="#fff" strokeWidth="1.500" /></Svg></button>
      <Svg w={15} h={12}><path d="M4.500 3.500h9v7h-9z" stroke="#fff" /><path d="M6 5h6v4H6zM14 5h1v3h-1zM0 2h5v4H3v3H2V6H0z" fill="#fff" /><path d="M1.500 0v2M3.500 0v2" stroke="#fff" /></Svg>
      <Svg w={14} h={14}><path d="M1 12C1 5 6 1 13 1M4 12.500c0-5 4-8 9-8M7 13c0-3 3-5 6-5" stroke="#ccc" strokeWidth="1.500" /><circle cx="11.500" cy="12" r="1.500" fill="#fff" /></Svg>
      <Svg w={15} h={12}><path d="M.5 4h3l3-3v10l-3-3h-3zM8.500 4q2 2 0 4M10.500 2.500q3.500 3.500 0 7" stroke="#fff" /><path d="M12.500 1q5 5 0 10" stroke="#777" /></Svg>
      <Svg w={16} h={15} className="ml-1"><path d="M0 0h14v12H5l-2 3v-3H0z" fill="#fff" /><path d="M3 3.500h8M3 6.500h8" stroke="#111" /><circle cx="11.500" cy="10.500" r="4" fill="#111" stroke="#fff" /><path d="M9 10.500h5" stroke="#fff" /></Svg>
      <Svg w={22} h={13}><rect x=".5" y=".5" width="21" height="12" stroke="#fff" /><path d="M3 3.500h16M3 6.500h16" stroke="#fff" strokeDasharray="2 1" /><path d="M5 9.500h12" stroke="#fff" strokeWidth="1.500" /></Svg>
      <div className="ml-1 w-[58px] whitespace-nowrap text-center text-[11px] leading-4"><div>16:48</div><div>2020-06-29</div></div>
    </div>
  </div>
);

// Glitchy strip of desktop that shows beside the window
const noiseColors = ['#111', '#ddd', '#fff', '#222', '#8ab', '#c5a', '#dd8', '#484', '#000', '#e98', '#5bb', '#fff'];
const Noise = () => (
  <svg width="5" height="505" fill="none" aria-hidden="true" shapeRendering="crispEdges">
    {Array.from({ length: 505 }, (_, i) => {
      const n = (i * i * 7 + i * 13) % 97;
      return <path key={i} d={`M${n % 3 === 0 ? 1 : 0} ${i}.5h5`} stroke={i > 385 && n % 4 ? '#0b0b10' : noiseColors[n % 12]} />;
    })}
  </svg>
);

const App = () => (
  <div className="flex h-screen flex-col overflow-hidden bg-[#333] pt-px font-['Open_Sans','Noto_Sans',sans-serif]">
    <div className="flex min-h-0 flex-1">
      <div className="w-[2px] shrink-0 bg-[linear-gradient(#0b2a28_0_12%,#2d6d75_12%_18%,#3a78b0_18%_20%,#9fd8c4_20%)]" />
      <div className="flex min-w-0 flex-1 flex-col border-b-2 border-[#8fa89c] bg-white pb-[6px] pl-[6px] pr-[2px] pt-[7px]">
        <main className="flex min-h-0 flex-1 flex-col border-r border-[#bbb]">
          <TitleBar />
          <Ribbon />
          <FormulaBar />
          <Sheet />
          <SheetTabs />
          <StatusBar />
        </main>
      </div>
      <div className="w-[5px] shrink-0 bg-[#eee]"><Noise /></div>
    </div>
    <Taskbar />
  </div>
);

export default App;
